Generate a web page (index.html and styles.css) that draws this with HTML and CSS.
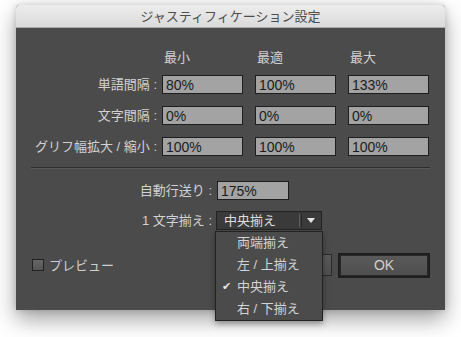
FILE: index.html
```html
<!DOCTYPE html>
<html lang="ja">
<head>
    <meta charset="UTF-8">
    <title>ジャスティフィケーション設定</title>
    <link rel="stylesheet" href="styles.css">
</head>
<body>

<div class="win">
    <div class="titlebar">ジャスティフィケーション設定</div>
    <div class="content">
        <div class="grid heads">
            <span></span>
            <span>最小</span>
            <span>最適</span>
            <span>最大</span>
        </div>
        <div class="grid fields">
            <label>単語間隔 :</label>
            <input type="text" value="80%" readonly>
            <input type="text" value="100%" readonly>
            <input type="text" value="133%" readonly>

            <label>文字間隔 :</label>
            <input type="text" value="0%" readonly>
            <input type="text" value="0%" readonly>
            <input type="text" value="0%" readonly>

            <label>グリフ幅拡大 / 縮小 :</label>
            <input type="text" value="100%" readonly>
            <input type="text" value="100%" readonly>
            <input type="text" value="100%" readonly>
        </div>

        <div class="sep"></div>

        <div class="opts">
            <label>自動行送り :</label>
            <input type="text" class="short" value="175%" readonly>

            <label>1 文字揃え :</label>
            <div class="select">
                <span class="value">中央揃え</span>
                <span class="divider"></span>
                <span class="arrow"></span>
                <ul class="menu">
                    <li>両端揃え</li>
                    <li>左 / 上揃え</li>
                    <li class="checked">中央揃え</li>
                    <li>右 / 下揃え</li>
                </ul>
            </div>
        </div>

        <div class="footer">
            <label class="check"><span class="box"></span>プレビュー</label>
            <div class="buttons">
                <button>キャンセル</button>
                <button class="default">OK</button>
            </div>
        </div>
    </div>
</div>

</body>
</html>
```

FILE: styles.css
```css
html, body {
    margin: 0;
    min-height: 337px;
    background: #ffffff;
}
body {
    font-family: "Liberation Sans", "Noto Sans CJK JP", sans-serif;
    font-size: 13px;
    padding: 5px 0 0 16px;
    box-sizing: border-box;
}
.win {
    width: 429px;
    height: 305px;
    border-radius: 4px 4px 0 0;
    background: #4b4b4b;
    box-shadow: 0 9px 22px rgba(0, 0, 0, 0.38), 0 0 6px rgba(0, 0, 0, 0.15);
    display: flex;
    flex-direction: column;
}
.titlebar {
    height: 22px;
    line-height: 22px;
    text-align: center;
    color: #4d4d4d;
    background: linear-gradient(#ededed, #dadada);
    border-bottom: 1px solid #a9a9a9;
    border-radius: 4px 4px 0 0;
    font-family: "Noto Sans CJK JP", sans-serif;
}
.content {
    padding-top: 21px;
    color: #d2d2d2;
}
.grid {
    display: grid;
    grid-template-columns: 134px repeat(3, 81px);
    column-gap: 12px;
}
.grid > * {
    min-width: 0;
}
.grid label {
    margin-right: -12px;
    padding-right: 5px;
}
.heads {
    height: 18px;
    line-height: 18px;
    margin-bottom: 8px;
}
.heads span {
    padding-left: 2px;
}
.fields {
    grid-auto-rows: 19px;
    row-gap: 12px;
}
label {
    box-sizing: border-box;
    text-align: right;
    padding-right: 4px;
    line-height: 19px;
    white-space: nowrap;
}
input {
    box-sizing: border-box;
    width: 100%;
    min-width: 0;
    height: 19px;
    margin: 0;
    padding: 0 0 0 3px;
    border: 1px solid #1e1e1e;
    background: #a3a3a3;
    color: #1c1c1c;
    font-family: "Liberation Sans", sans-serif;
    font-size: 14px;
    outline: none;
}
.sep {
    height: 1px;
    margin: 11px 15px 0 15px;
    background: #2f2f2f;
    border-bottom: 1px solid #585858;
}
.opts {
    display: grid;
    grid-template-columns: 201px auto;
    grid-auto-rows: 19px;
    row-gap: 11px;
    margin-top: 12px;
    justify-items: start;
}
.opts label {
    justify-self: stretch;
    padding-right: 5px;
}
.short {
    width: 72px;
}
.select {
    position: relative;
    box-sizing: border-box;
    width: 106px;
    height: 19px;
    margin-left: -1px;
    border: 1px solid #222222;
    background: #3a3a3a;
    display: flex;
    align-items: center;
}
.select .value {
    flex: 1;
    padding-left: 7px;
    color: #dedede;
    font-size: 13px;
    line-height: 17px;
}
.select .divider {
    width: 1px;
    height: 13px;
    border-left: 1px solid #5e5e5e;
    border-right: 1px solid #2a2a2a;
    margin-right: 5px;
}
.select .arrow {
    width: 0;
    height: 0;
    border-left: 4px solid transparent;
    border-right: 4px solid transparent;
    border-top: 5px solid #e6e6e6;
    margin-right: 6px;
}
.menu {
    position: absolute;
    top: 19px;
    left: -2px;
    z-index: 2;
    box-sizing: border-box;
    width: 108px;
    margin: 0;
    padding: 0;
    list-style: none;
    background: #4b4b4b;
    border: 1px solid #222222;
    box-shadow: 0 3px 6px rgba(0, 0, 0, 0.35);
}
.menu li {
    height: 22px;
    line-height: 21px;
    padding-left: 21px;
    color: #d4d4d4;
    font-size: 13px;
    position: relative;
}
.menu li.checked::before {
    content: "✔";
    position: absolute;
    left: 6px;
    font-size: 11px;
    color: #e4e4e4;
}
.footer {
    display: flex;
    justify-content: space-between;
    align-items: center;
    margin-top: 24px;
    padding: 0 15px 0 16px;
}
.check {
    display: flex;
    align-items: center;
    padding: 0;
    font-size: 13px;
    color: #cfcfcf;
}
.check .box {
    box-sizing: border-box;
    width: 12px;
    height: 12px;
    margin-right: 5px;
    border: 1px solid #222222;
    background: linear-gradient(#666666, #555555);
}
.buttons {
    display: flex;
    gap: 8px;
    align-items: center;
}
button {
    box-sizing: border-box;
    width: 92px;
    height: 22px;
    border: 1px solid #2a2a2a;
    background: linear-gradient(#5a5a5a, #4e4e4e);
    color: #d0d0d0;
    font-family: "Liberation Sans", "Noto Sans CJK JP", sans-serif;
    font-size: 14px;
    padding: 0;
}
button.default {
    width: 88px;
    height: 21px;
    margin-right: 2px;
    box-shadow: 0 0 0 2px #1e1e1e;
}
```
